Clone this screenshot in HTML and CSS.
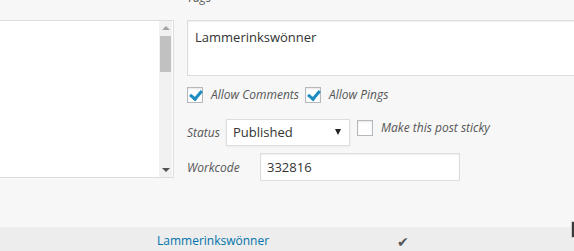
FILE: index.html
```html
<!DOCTYPE html>
<html lang="en">

<head>
    <meta charset="UTF-8">
    <meta name="viewport" content="width=device-width, initial-scale=1.0">
    <title>Quick Edit</title>
    <link rel="stylesheet" href="styles.css">
</head>

<body>
    <div class="quick-edit">
        <div class="cat-box">
            <div class="cat-list"></div>
            <div class="scrollbar">
                <span class="arrow up"></span>
                <span class="thumb"></span>
                <span class="grow"></span>
                <span class="arrow down"></span>
            </div>
        </div>
        <div class="fields">
            <label class="tags-label">Tags</label>
            <div class="tags-input">Lammerinkswönner</div>
            <div class="check-row">
                <label class="check"><span class="box checked"></span><em>Allow Comments</em></label>
                <label class="check"><span class="box checked"></span><em>Allow Pings</em></label>
            </div>
            <div class="status-row">
                <em class="field-label">Status</em>
                <div class="select">
                    <span>Published</span>
                    <span class="caret"></span>
                </div>
                <label class="check sticky"><span class="box"></span><em>Make this post sticky</em></label>
            </div>
            <div class="workcode-row">
                <em class="field-label wide">Workcode</em>
                <div class="text-input">332816</div>
            </div>
        </div>
    </div>
    <div class="list-row">
        <a class="tag-link" href="#">Lammerinkswönner</a>
        <span class="tick">&#10004;</span>
    </div>
    <div class="handle"></div>
</body>

</html>
```

FILE: styles.css
```css
* {
    box-sizing: border-box;
}

html {
    overflow: hidden;
}

body {
    margin: 0;
    height: 251px;
    overflow: hidden;
    font-family: "Open Sans", "Noto Sans", sans-serif;
    background-color: #f7f7f7;
    color: #555;
}

.quick-edit {
    display: flex;
    height: 227px;
}

.cat-box {
    display: flex;
    width: 175px;
    height: 158px;
    margin-top: 20px;
    margin-left: -1px;
    background-color: #fff;
    border: 1px solid #dddddd;
}

.cat-list {
    flex: 1;
}

.scrollbar {
    width: 13px;
    margin-right: 1px;
    display: flex;
    flex-direction: column;
    background-color: #f1f1f1;
}

.arrow {
    height: 14px;
    display: flex;
    justify-content: center;
    align-items: center;
}

.arrow::before {
    content: "";
    border-left: 4px solid transparent;
    border-right: 4px solid transparent;
}

.arrow.up::before {
    border-bottom: 4px solid #a3a3a3;
}

.arrow.down::before {
    border-top: 4px solid #505050;
}

.thumb {
    height: 36px;
    margin: 1px 1px 0;
    background-color: #c1c1c1;
}

.grow {
    flex: 1;
}

.fields {
    flex: 1;
    min-width: 0;
    margin-left: 13px;
    display: flex;
    flex-direction: column;
}

.tags-label {
    display: block;
    height: 20px;
    margin-top: -12px;
    font-size: 12px;
    font-style: italic;
    line-height: 20px;
}

.tags-input {
    height: 56px;
    margin-top: 12px;
    margin-right: -10px;
    padding: 5px 7px;
    font-size: 13px;
    line-height: 22px;
    color: #333;
    background-color: #fff;
    border: 1px solid #dddddd;
    box-shadow: inset 0 1px 2px rgba(0, 0, 0, .07);
}

.check-row {
    display: flex;
    gap: 6px;
    margin-top: 11px;
}

.check {
    display: flex;
    align-items: center;
    gap: 8px;
    font-size: 12px;
    line-height: 16px;
}

.box {
    width: 16px;
    height: 16px;
    flex: none;
    background-color: #fff;
    border: 1px solid #b4b9be;
    box-shadow: inset 0 1px 2px rgba(0, 0, 0, .1);
    position: relative;
}

.box.checked::after {
    content: "";
    position: absolute;
    left: 4px;
    top: 0px;
    width: 5px;
    height: 9px;
    border-right: 3px solid #1e8cbe;
    border-bottom: 3px solid #1e8cbe;
    transform: rotate(40deg);
}

.status-row {
    display: flex;
    align-items: center;
    margin-top: 15px;
    height: 28px;
}

.field-label {
    width: 39px;
    font-size: 12px;
}

.field-label.wide {
    width: 73px;
}

.select {
    width: 124px;
    height: 27px;
    padding: 0 6px;
    display: flex;
    align-items: center;
    justify-content: space-between;
    font-size: 13px;
    color: #333;
    background-color: #fff;
    border: 1px solid #dddddd;
    box-shadow: 0 1px 2px rgba(0, 0, 0, .05);
}

.caret {
    border-left: 3px solid transparent;
    border-right: 3px solid transparent;
    border-top: 6px solid #222;
    margin-right: 2px;
}

.sticky {
    margin-left: 7px;
    align-self: flex-start;
    margin-top: 2px;
}

.workcode-row {
    display: flex;
    align-items: center;
    margin-top: 7px;
}

.text-input {
    width: 200px;
    height: 28px;
    padding: 0 6px;
    display: flex;
    align-items: center;
    font-size: 13px;
    color: #333;
    background-color: #fff;
    border: 1px solid #dddddd;
    box-shadow: inset 0 1px 2px rgba(0, 0, 0, .07);
}

.list-row {
    height: 24px;
    display: flex;
    align-items: flex-end;
    background-color: #ededed;
    padding-left: 157px;
}

.tag-link {
    width: 240px;
    font-size: 12px;
    line-height: 20px;
    color: #0073aa;
    text-decoration: none;
}

.tick {
    font-size: 14px;
    line-height: 19px;
    color: #555;
}

.handle {
    position: fixed;
    right: 0;
    top: 221px;
    width: 3px;
    height: 17px;
    background-color: #3a3a3a;
    border: 1px solid #ccc;
    border-right: none;
}
```
